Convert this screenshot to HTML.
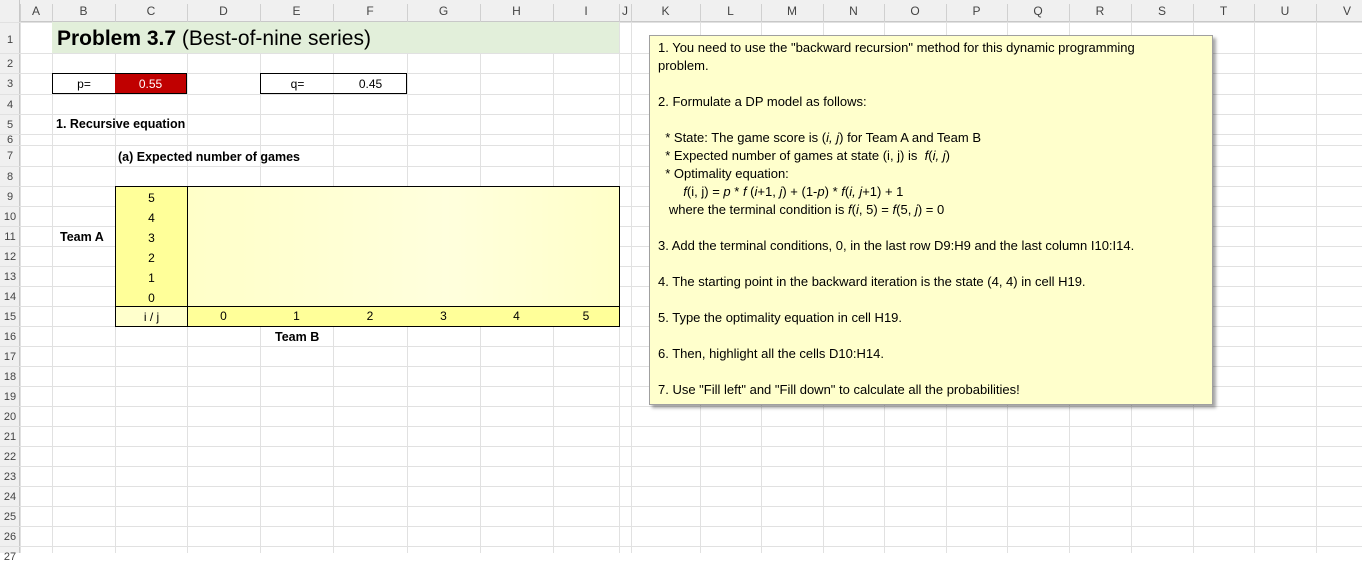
<!DOCTYPE html>
<html><head><meta charset="utf-8"><style>
*{margin:0;padding:0;box-sizing:border-box}
body{width:1362px;height:553px;overflow:hidden;background:#fff;font-family:"Liberation Sans",sans-serif;position:relative;color:#000}
.v{position:absolute;top:22px;width:1px;height:531px;background:#e1e1e1}
.h{position:absolute;left:0;height:1px;width:1362px;background:#e1e1e1}
.ch{position:absolute;top:0;height:22px;font-size:12px;color:#444;text-align:center;line-height:22px}
.rh{position:absolute;left:0;width:20px;font-size:11px;color:#444;text-align:center}
.a{position:absolute;font-size:12.5px;white-space:nowrap}
.c{position:absolute;font-size:12px;text-align:center}
</style></head><body>
<div style="position:absolute;left:0;top:0;width:1362px;height:22px;background:#f0f0f0;border-bottom:1px solid #c8c8c8"></div>
<div style="position:absolute;left:0;top:0;width:20px;height:553px;background:#f0f0f0;border-right:1px solid #c8c8c8"></div>
<div id="g"></div>
<script>
var xs=[20,52,115,187,260,333,407,480,553,619,631,700,761,823,884,946,1007,1069,1131,1193,1254,1316,1378];
var L="ABCDEFGHIJKLMNOPQRSTUV";
var ys=[22,53,73,94,114,134,145,166];for(var y=186;y<=546;y+=20)ys.push(y);
var h="";
for(var i=0;i<xs.length-1;i++){h+='<div class="v" style="left:'+xs[i]+'px"></div>';h+='<div class="ch" style="left:'+xs[i]+'px;width:'+(xs[i+1]-xs[i])+'px">'+L[i]+'</div>';h+='<div style="position:absolute;top:4px;height:18px;width:1px;background:#d0d0d0;left:'+xs[i]+'px"></div>';}
for(var j=0;j<ys.length;j++){h+='<div class="h" style="top:'+ys[j]+'px"></div>';var b=(j+1<ys.length?ys[j+1]:ys[j]+20);h+='<div class="rh" style="top:'+ys[j]+'px;height:'+(b-ys[j])+'px;line-height:'+(b-ys[j]+(j==0?6:2))+'px">'+(j+1)+'</div>';}
document.getElementById("g").innerHTML=h;
</script>
<div style="position:absolute;left:52px;top:22px;width:567px;height:31px;background:#e2efda"></div>
<div class="a" style="left:57px;top:27px;font-size:21px"><b>Problem 3.7</b> (Best-of-nine series)</div>
<div class="c" style="left:52px;top:73px;width:63px;height:21px;border:1px solid #000;border-right:none;line-height:20px">p=</div>
<div class="c" style="left:115px;top:73px;width:72px;height:21px;border:1px solid #000;border-left:none;background:#c00000;color:#fff;line-height:20px">0.55</div>
<div class="c" style="left:260px;top:73px;width:147px;height:21px;border:1px solid #000;line-height:20px"><span style="position:absolute;left:0;width:73px">q=</span><span style="position:absolute;left:73px;width:73px">0.45</span></div>
<div class="a" style="left:56px;top:117px"><b>1. Recursive equation</b></div>
<div class="a" style="left:118px;top:150px"><b>(a) Expected number of games</b></div>
<div style="position:absolute;left:115px;top:186px;width:73px;height:121px;background:#ffff99;border:1px solid #000"></div>
<div style="position:absolute;left:187px;top:186px;width:433px;height:121px;background:linear-gradient(90deg,#ffffc8,#ffffdd 60%,#ffffc8);border:1px solid #000"></div>
<div class="c" style="left:115px;top:188px;width:73px;line-height:20px">5<br>4<br>3<br>2<br>1<br>0</div>
<div class="a" style="left:60px;top:230px"><b>Team A</b></div>
<div class="c" style="left:115px;top:306px;width:73px;height:21px;background:#ffffcc;border:1px solid #000;line-height:20px">i / j</div>
<div style="position:absolute;left:187px;top:306px;width:433px;height:21px;background:#ffff99;border:1px solid #000"></div>
<div class="c" style="left:187px;top:309px;width:73px">0</div>
<div class="c" style="left:260px;top:309px;width:73px">1</div>
<div class="c" style="left:333px;top:309px;width:74px">2</div>
<div class="c" style="left:407px;top:309px;width:73px">3</div>
<div class="c" style="left:480px;top:309px;width:73px">4</div>
<div class="c" style="left:553px;top:309px;width:66px">5</div>
<div class="a" style="left:275px;top:330px"><b>Team B</b></div>
<div style="position:absolute;left:649px;top:35px;width:564px;height:370px;background:#ffffcc;border:1px solid #a0a0a0;box-shadow:3px 3px 3px rgba(0,0,0,.35);font-size:13px;line-height:18px;padding:3px 0 0 8px;white-space:nowrap">
1. You need to use the "backward recursion" method for this dynamic programming<br>problem.<br><br>
2. Formulate a DP model as follows:<br><br>
&nbsp; * State: The game score is (<i>i, j</i>) for Team A and Team B<br>
&nbsp; * Expected number of games at state (i, j) is &nbsp;<i>f</i>(<i>i, j</i>)<br>
&nbsp; * Optimality equation:<br>
&nbsp; &nbsp; &nbsp; &nbsp;<i>f</i>(i, j) = <i>p</i> * <i>f</i> (<i>i</i>+1, <i>j</i>) + (1-<i>p</i>) * <i>f</i>(<i>i, j</i>+1) + 1<br>
&nbsp; &nbsp;where the terminal condition is <i>f</i>(<i>i</i>, 5) = <i>f</i>(5, <i>j</i>) = 0<br><br>
3. Add the terminal conditions, 0, in the last row D9:H9 and the last column I10:I14.<br><br>
4. The starting point in the backward iteration is the state (4, 4) in cell H19.<br><br>
5. Type the optimality equation in cell H19.<br><br>
6. Then, highlight all the cells D10:H14.<br><br>
7. Use "Fill left" and "Fill down" to calculate all the probabilities!
</div>
</body></html>
